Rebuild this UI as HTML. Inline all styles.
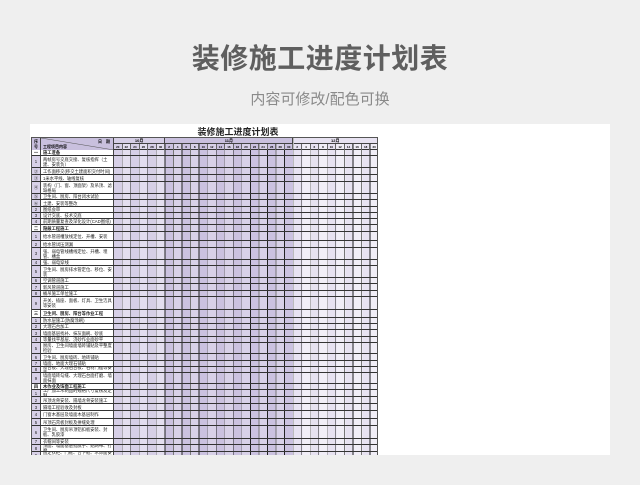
<!DOCTYPE html>
<html><head><meta charset="utf-8"><style>
*{margin:0;padding:0;box-sizing:border-box}
body{width:640px;height:485px;background:#efefef;position:relative;overflow:hidden;font-family:"Liberation Sans","Noto Sans CJK SC",sans-serif}
.t1{position:absolute;top:37px;left:0;width:640px;text-align:center;font-size:28px;color:#5f5f5f;letter-spacing:0.5px;font-weight:bold}
.t2{position:absolute;top:88px;left:0;width:640px;text-align:center;font-size:15px;color:#8a8a8a}
.sheet{position:absolute;left:30px;top:124px;width:580px;height:331px;background:#fff;overflow:hidden}
.st{position:absolute;left:133px;top:1px;width:150px;text-align:center;font-size:9px;font-weight:bold;color:#222}
.tbl{position:absolute;left:1px;top:13px;width:347px;height:318px;overflow:hidden;border-left:1px solid #555;border-right:1px solid #555}
.gbg{position:absolute;left:82px;top:0;width:265px;height:318px}
.m{position:absolute;top:0;height:318px}
.m10{left:0;width:51.3px;background:repeating-linear-gradient(to right,#d6cfe6 0 8.548px,#e3deef 8.548px 17.096px)}
.m11{left:51.3px;width:128.2px;background:repeating-linear-gradient(to right,#cbc2e0 0 8.548px,#d8d1e8 8.548px 17.096px)}
.m12{left:179.5px;width:85.5px;background:repeating-linear-gradient(to right,#e7e2f1 0 8.548px,#f1eef7 8.548px 17.096px)}
.vl{position:absolute;left:0;top:0;width:265px;height:318px;background:repeating-linear-gradient(to right,transparent 0 7.8px,#777 7.8px 8.548px,transparent 8.548px 16.35px,#222 16.35px 17.096px)}
.hd{position:absolute;left:0;top:0;width:345px;height:13px;border-top:1px solid #555;border-bottom:1px solid #333}
.hs{position:absolute;left:0;top:0;width:9px;height:12px;background:#c9c0de;border-right:1px solid #444;font-size:4px;font-weight:bold;text-align:center;line-height:5.5px;padding-top:0.5px}
.hi{position:absolute;left:9px;top:0;width:73px;height:12px;background:#c9c0de;border-right:1px solid #444;overflow:hidden}
.hi .a{position:absolute;right:3px;top:1px;font-size:4px;font-weight:bold}
.hi .b{position:absolute;left:2px;bottom:0.5px;font-size:4px;font-weight:bold}
.mo{position:absolute;top:0;height:6px;border-bottom:1px solid #444;font-size:4px;font-weight:bold;text-align:center;line-height:6px;border-right:1px solid #444}
.dy{position:absolute;top:6px;height:6px;font-size:3px;display:flex}
.dy span{width:8.548px;text-align:center;line-height:6px;border-right:1px solid #666;font-weight:bold}
.body{position:absolute;left:0;top:13px;width:345px}
.r{display:flex;width:345px;border-bottom:1px solid #333;font-size:4.3px;line-height:5px;color:#222}
.r .s{width:9px;flex:none;background:#d8d1e8;border-right:1px solid #444;display:flex;align-items:center;justify-content:center}
.r .i{width:73px;flex:none;background:#fff;border-right:1px solid #444;padding-left:2px;display:flex;align-items:center;overflow:hidden}
.r.sec .s{background:#fff;font-weight:bold}
.r.sec .i{font-weight:bold}
</style></head><body>
<div class="t1">装修施工进度计划表</div>
<div class="t2">内容可修改/配色可换</div>
<div class="sheet">
<div class="st">装修施工进度计划表</div>
<div class="tbl">
<div class="gbg"><div class="m m10"></div><div class="m m11"></div><div class="m m12"></div><div class="vl"></div></div>
<div class="hd">
<div class="hs">序<br>号</div>
<div class="hi"><svg width="73" height="12" style="position:absolute;left:0;top:0"><line x1="0" y1="0" x2="73" y2="12" stroke="#555" stroke-width="0.5"/></svg><span class="a">日　期</span><span class="b">工程项目内容</span></div>
<div class="mo" style="left:82px;width:51.3px;background:#d6cfe6">10月</div>
<div class="mo" style="left:133.3px;width:128.2px;background:#c9c0de">11月</div>
<div class="mo" style="left:261.5px;width:84.5px;background:#e7e2f1">12月</div>
<div class="dy" style="left:82px"><span>20</span><span>22</span><span>24</span><span>26</span><span>28</span><span>30</span><span>2</span><span>4</span><span>6</span><span>8</span><span>10</span><span>12</span><span>14</span><span>16</span><span>18</span><span>20</span><span>22</span><span>24</span><span>26</span><span>28</span><span>30</span><span>2</span><span>4</span><span>6</span><span>8</span><span>10</span><span>12</span><span>14</span><span>16</span><span>18</span><span>20</span></div>
</div>
<div class="body">
<div class="r sec" style="height:6px"><div class="s">一</div><div class="i">施工准备</div></div>
<div class="r" style="height:12px"><div class="s">1</div><div class="i">两帧房号交底交接、复核指挥（土建、安装负）</div></div>
<div class="r" style="height:7px"><div class="s">②</div><div class="i">工作面移交(移交土建面积交付时间)</div></div>
<div class="r" style="height:7px"><div class="s">③</div><div class="i">1米水平线、轴线复核</div></div>
<div class="r" style="height:12px"><div class="s">④</div><div class="i">装构（门、窗、顶面架）及吊顶、滤缺格局</div></div>
<div class="r" style="height:6px"><div class="s">⑤</div><div class="i">卫生间、厨房、阳台闭水试验</div></div>
<div class="r" style="height:7px"><div class="s">⑥</div><div class="i">土建、安装等整改</div></div>
<div class="r" style="height:6px"><div class="s">2</div><div class="i">图纸会审</div></div>
<div class="r" style="height:6px"><div class="s">3</div><div class="i">设计交底、技术交底</div></div>
<div class="r" style="height:6px"><div class="s">4</div><div class="i">前期质量复查及深化设计(CAD图纸)</div></div>
<div class="r sec" style="height:7px"><div class="s">二</div><div class="i">隐蔽工程施工</div></div>
<div class="r" style="height:9px"><div class="s">1</div><div class="i">给水管道槽放线定位、开槽、安装</div></div>
<div class="r" style="height:7px"><div class="s">2</div><div class="i">给水管试压测漏</div></div>
<div class="r" style="height:12px"><div class="s">3</div><div class="i">强、弱电管线槽线定位、开槽、埋管、槽盒</div></div>
<div class="r" style="height:6px"><div class="s">4</div><div class="i">强、弱电穿线</div></div>
<div class="r" style="height:12px"><div class="s">5</div><div class="i">卫生间、厨房排水管定位、移位、安装</div></div>
<div class="r" style="height:6px"><div class="s">6</div><div class="i">空调管道施工</div></div>
<div class="r" style="height:7px"><div class="s">7</div><div class="i">新风管道施工</div></div>
<div class="r" style="height:6px"><div class="s">8</div><div class="i">桶吊施工单位施工</div></div>
<div class="r" style="height:13px"><div class="s">9</div><div class="i">开关、插座、面板、灯具、卫生洁具等安装</div></div>
<div class="r sec" style="height:8px"><div class="s">三</div><div class="i">卫生间、厨房、阳台等作业工程</div></div>
<div class="r" style="height:6px"><div class="s">1</div><div class="i">防水层施工(防腐涂刷)</div></div>
<div class="r" style="height:6px"><div class="s">2</div><div class="i">大理石台加工</div></div>
<div class="r" style="height:7px"><div class="s">3</div><div class="i">墙面基层找补、抹灰面刷、砂底</div></div>
<div class="r" style="height:6px"><div class="s">4</div><div class="i">等量找平基层、浇砂作业面砂平</div></div>
<div class="r" style="height:11px"><div class="s">5</div><div class="i">厨房、卫生间墙面墙砖铺贴及平整度检验</div></div>
<div class="r" style="height:7px"><div class="s">6</div><div class="i">卫生间、厨房墙砖、地砖铺贴</div></div>
<div class="r" style="height:6px"><div class="s">7</div><div class="i">墙面、地面大理石铺贴</div></div>
<div class="r" style="height:6px"><div class="s">8</div><div class="i">窗台板、大理石台板、石材门槛等安装</div></div>
<div class="r" style="height:11px"><div class="s">9</div><div class="i">墙面墙砖勾缝、大理石台面打磨、墙面抹面</div></div>
<div class="r sec" style="height:6px"><div class="s">四</div><div class="i">木作业及饰面工程施工</div></div>
<div class="r" style="height:7px"><div class="s">1</div><div class="i">工厂加工木制品的规格尺寸复核及定制</div></div>
<div class="r" style="height:7px"><div class="s">2</div><div class="i">吊顶龙骨安装、隔墙龙骨安装施工</div></div>
<div class="r" style="height:7px"><div class="s">3</div><div class="i">隔墙工程验收及封板</div></div>
<div class="r" style="height:8px"><div class="s">4</div><div class="i">门窗木基层及墙面木基层制作</div></div>
<div class="r" style="height:7px"><div class="s">5</div><div class="i">吊顶石膏板封板及拼缝处理</div></div>
<div class="r" style="height:13px"><div class="s">6</div><div class="i">卫生间、厨房吊顶铝扣板安装、封板、乳胶漆</div></div>
<div class="r" style="height:6px"><div class="s">7</div><div class="i">衣帽间等安装</div></div>
<div class="r" style="height:7px"><div class="s">8</div><div class="i">顶面、墙面基层批腻子、贴网布、打磨</div></div>
<div class="r" style="height:7px"><div class="s">9</div><div class="i">固定衣柜、门框、合下框、木饰面安装</div></div>
<div class="r" style="height:8px"><div class="s">10</div><div class="i">木门安装及五金安装</div></div>
</div>
</div>
</div>
</body></html>
